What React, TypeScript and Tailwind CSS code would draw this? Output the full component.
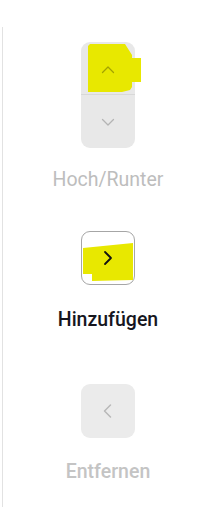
import React from "react";

function Chevron({ dir, className, stroke = 1.5 }: { dir: "up" | "down" | "left" | "right"; className?: string; stroke?: number }) {
  const d =
    dir === "up"
      ? "M2.5 9.5 L8 4 L13.5 9.5"
      : dir === "down"
      ? "M2.5 4.5 L8 10 L13.5 4.5"
      : dir === "left"
      ? "M10.5 2 L4.5 8 L10.5 14"
      : "M5 2 L11 8 L5 14";
  return (
    <svg viewBox={dir === "up" || dir === "down" ? "0 0 16 14" : "0 0 16 16"} className={className} fill="none">
      <path d={d} stroke="currentColor" strokeWidth={stroke} strokeLinecap="round" strokeLinejoin="round" />
    </svg>
  );
}

export default function App() {
  return (
    <div className="relative w-[213px] h-[507px] bg-white pt-[27px] pl-[2px] overflow-hidden" style={{ fontFamily: "Roboto, 'Liberation Sans', sans-serif" }}>
      <div className="h-full border-l border-[#e2e2e2] flex flex-col items-center pt-[15px]">
        <div className="w-[54px] h-[106px] rounded-[9px] bg-[#e8e8e8] flex flex-col overflow-hidden">
          <div className="h-[53px] flex items-center justify-center border-b border-[#d8d8d8]">
            <Chevron dir="up" className="w-[16px] h-[14px] text-[#a8a8a8]" stroke={1.3} />
          </div>
          <div className="flex-1 flex items-center justify-center">
            <Chevron dir="down" className="w-[16px] h-[14px] text-[#b4b4b4]" stroke={1.3} />
          </div>
        </div>
        <div className="mt-[20px] text-[19.5px] leading-[24px] text-[#bdbdbd]">Hoch/Runter</div>

        <div className="mt-[39px] w-[54px] h-[54px] rounded-[9px] border-[1.5px] border-[#a6a6a6] bg-white flex items-center justify-center">
          <Chevron dir="right" className="w-[16px] h-[16px] text-[#111111]" stroke={1.8} />
        </div>
        <div className="mt-[23px] text-[19.5px] leading-[24px] font-medium text-[#16161e]">Hinzufügen</div>

        <div className="mt-[52px] w-[54px] h-[54px] rounded-[9px] bg-[#ebebeb] flex items-center justify-center">
          <Chevron dir="left" className="w-[16px] h-[16px] text-[#b8b8b8]" stroke={1.5} />
        </div>
        <div className="mt-[22px] text-[19.5px] leading-[24px] font-medium text-[#c4c4c4]">Entfernen</div>
      </div>

      <svg className="absolute left-0 top-0 pointer-events-none" width="213" height="507" viewBox="0 0 213 507">
        <polygon
          points="88,46 90,44 125,44 132,55 132,58 141,58 141,82 132,82 132,87 130,90 122,92 88,92"
          fill="#e8e800"
        />
        <polygon points="83,248 133,243 133,280 92,281 92,274 83,274" fill="#e8e800" />
      </svg>
      <div className="absolute left-[81px] top-[231px] w-[54px] h-[54px] flex items-center justify-center pointer-events-none">
        <svg viewBox="0 0 16 16" className="w-[16px] h-[16px] text-[#111111]" fill="none">
          <path d="M5 2 L11 8 L5 14" stroke="currentColor" strokeWidth={1.8} strokeLinecap="round" strokeLinejoin="round" />
        </svg>
      </div>
      <div className="absolute left-[81px] top-[43px] w-[54px] h-[53px] flex items-center justify-center pointer-events-none">
        <svg viewBox="0 0 16 14" className="w-[16px] h-[14px] text-[#a3a300]" fill="none">
          <path d="M2.5 9.5 L8 4 L13.5 9.5" stroke="currentColor" strokeWidth={1.3} strokeLinecap="round" strokeLinejoin="round" />
        </svg>
      </div>
    </div>
  );
}
